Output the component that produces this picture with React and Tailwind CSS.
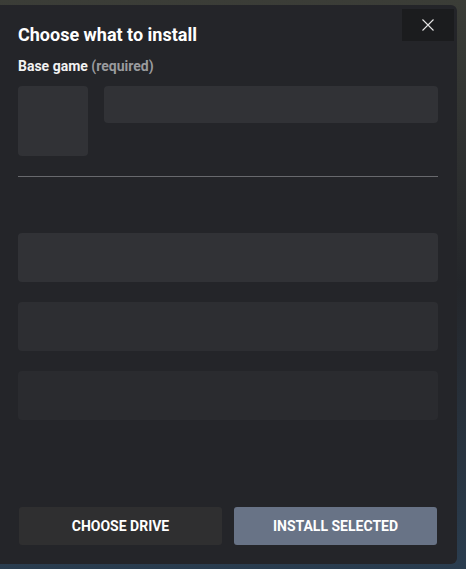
import React from 'react';

const font = { fontFamily: 'Roboto, "Noto Sans", sans-serif' };

const CloseIcon = () => (
  <svg width="12" height="12" viewBox="0 0 12 12" fill="none" stroke="#e5e5e5" strokeWidth="1.1">
    <path d="M0.5 0.5 L11.5 11.5 M11.5 0.5 L0.5 11.5" />
  </svg>
);

export default function App() {
  return (
    <div
      className="w-[466px] h-[569px] overflow-hidden bg-gradient-to-b from-[#3b3d37] via-[#24262a] to-[#2a3d4f] flex flex-col pt-[5px]"
      style={font}
    >
      <div className="relative w-[457px] h-[559px] bg-[#242529] rounded-r-[6px] flex flex-col pl-[18px] pr-[19px] pt-[20px] pb-[19px]">
        <button className="absolute top-[4px] right-[3px] w-[52px] h-[32px] bg-[#1b1c1e] flex items-center justify-center">
          <CloseIcon />
        </button>

        <h1 className="text-white text-[18px] font-bold leading-[20px]">Choose what to install</h1>
        <div className="mt-[13px] text-[14px] font-bold leading-[16px] text-[#f2f2f2]">
          Base game <span className="text-[#9a9b9e]">(required)</span>
        </div>

        <div className="mt-[12px] flex gap-[16px]">
          <div className="w-[70px] h-[70px] rounded-[4px] bg-[#313236]" />
          <div className="flex-1 h-[37px] rounded-[4px] bg-[#313236]" />
        </div>

        <div className="mt-[20px] h-px bg-[#68696d]" />

        <div className="mt-[56px] flex flex-col gap-[20px]">
          <div className="h-[49px] rounded-[4px] bg-[#313236]" />
          <div className="h-[49px] rounded-[4px] bg-[#2d2e32]" />
          <div className="h-[49px] rounded-[4px] bg-[#2a2b2f]" />
        </div>

        <div className="mt-auto flex gap-[12px] px-px">
          <button className="flex-1 h-[38px] rounded-[3px] bg-[#2f2f30] text-white text-[14px] font-bold">
            CHOOSE DRIVE
          </button>
          <button className="flex-1 h-[38px] rounded-[3px] bg-[#687386] text-white text-[14px] font-bold">
            INSTALL SELECTED
          </button>
        </div>
      </div>
    </div>
  );
}
